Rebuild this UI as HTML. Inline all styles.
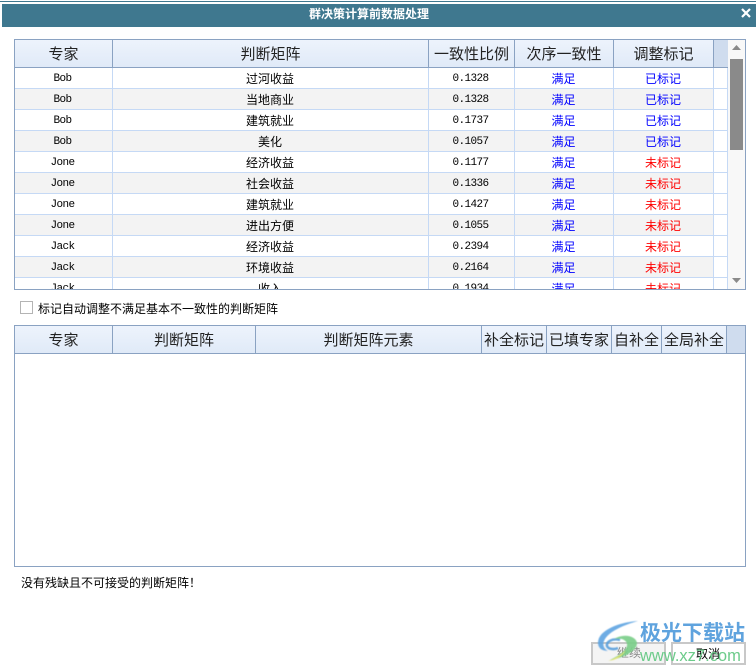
<!DOCTYPE html>
<html><head><meta charset="utf-8">
<style>
html,body{margin:0;padding:0;width:756px;height:672px;overflow:hidden;background:#fff}
body{position:relative;font-family:"Liberation Sans","WenQuanYi Zen Hei","Noto Sans CJK SC",sans-serif;color:#000}
.abs{position:absolute}
.box{position:absolute;left:14px;width:730px;border:1px solid #8aa2c2;overflow:hidden;background:#fff}
table{border-collapse:separate;border-spacing:0;table-layout:fixed;position:absolute;left:0;top:0}
th{padding:0;box-sizing:border-box;height:28px;font-weight:normal;font-size:15px;color:#222;border-right:1px solid #8aa2c2;border-bottom:1px solid #8aa2c2;background:linear-gradient(#edf3fc,#e0eaf8);white-space:nowrap;overflow:hidden}
td{box-sizing:border-box;height:21px;padding:0 1px 0 0;font-size:12px;text-align:center;border-right:1px solid #c5d9f5;border-bottom:1px solid #c5d9f5;white-space:nowrap;overflow:hidden}
tr.e td{background:#f3f3f3}
tr td:last-child{background:#fff}
td.m{font-family:"Liberation Mono",monospace;font-size:11px;letter-spacing:-.6px;padding:2px 2px 0 0}
.b{color:#00f}.r{color:#f00}
th.x{background:#cfdcee;border-right:0}
</style></head><body>
<div class="abs" style="left:0;top:1px;width:756px;height:1px;background:#3f788f"></div>
<div class="abs" style="left:2px;top:4px;width:754px;height:23px;background:#3f788f"></div>
<div class="abs" style="left:2px;top:4px;width:734px;height:21px;line-height:20px;text-align:center;color:#fff;font-size:12px;font-weight:bold">群决策计算前数据处理</div>
<svg class="abs" style="left:740px;top:7px" width="12" height="12"><path d="M2 2L10 10M10 2L2 10" stroke="#fff" stroke-width="2.2"/></svg>

<div class="box" style="top:39px;height:249px">
<table style="width:713px">
<colgroup><col style="width:98px"><col style="width:316px"><col style="width:86px"><col style="width:99px"><col style="width:100px"><col style="width:14px"></colgroup>
<tr><th>专家</th><th>判断矩阵</th><th>一致性比例</th><th>次序一致性</th><th>调整标记</th><th class="x"></th></tr>
<tr><td class="m">Bob</td><td>过河收益</td><td class="m">0.1328</td><td class="b">满足</td><td class="b">已标记</td><td></td></tr>
<tr class="e"><td class="m">Bob</td><td>当地商业</td><td class="m">0.1328</td><td class="b">满足</td><td class="b">已标记</td><td></td></tr>
<tr><td class="m">Bob</td><td>建筑就业</td><td class="m">0.1737</td><td class="b">满足</td><td class="b">已标记</td><td></td></tr>
<tr class="e"><td class="m">Bob</td><td>美化</td><td class="m">0.1057</td><td class="b">满足</td><td class="b">已标记</td><td></td></tr>
<tr><td class="m">Jone</td><td>经济收益</td><td class="m">0.1177</td><td class="b">满足</td><td class="r">未标记</td><td></td></tr>
<tr class="e"><td class="m">Jone</td><td>社会收益</td><td class="m">0.1336</td><td class="b">满足</td><td class="r">未标记</td><td></td></tr>
<tr><td class="m">Jone</td><td>建筑就业</td><td class="m">0.1427</td><td class="b">满足</td><td class="r">未标记</td><td></td></tr>
<tr class="e"><td class="m">Jone</td><td>进出方便</td><td class="m">0.1055</td><td class="b">满足</td><td class="r">未标记</td><td></td></tr>
<tr><td class="m">Jack</td><td>经济收益</td><td class="m">0.2394</td><td class="b">满足</td><td class="r">未标记</td><td></td></tr>
<tr class="e"><td class="m">Jack</td><td>环境收益</td><td class="m">0.2164</td><td class="b">满足</td><td class="r">未标记</td><td></td></tr>
<tr><td class="m">Jack</td><td>收入</td><td class="m">0.1934</td><td class="b">满足</td><td class="r">未标记</td><td></td></tr>
</table>
<div class="abs" style="left:713px;top:0;width:17px;height:249px;background:#f8f8f8"></div>
<svg class="abs" style="left:713px;top:0" width="17" height="249">
<path d="M4 10L8.5 5L13 10Z" fill="#8a8a8a"/>
<rect x="2" y="19" width="13" height="91" fill="#8a8a8a"/>
<path d="M4 238L8.5 243L13 238Z" fill="#8a8a8a"/>
</svg>
</div>

<div class="abs" style="left:20px;top:301px;width:11px;height:11px;border:1px solid #b4b4b4;background:#fff"></div>
<div class="abs" style="left:38px;top:301px;font-size:12px;line-height:16px;white-space:nowrap">标记自动调整不满足基本不一致性的判断矩阵</div>

<div class="box" style="top:325px;height:240px">
<table style="width:730px">
<colgroup><col style="width:98px"><col style="width:143px"><col style="width:226px"><col style="width:65px"><col style="width:65px"><col style="width:50px"><col style="width:65px"><col style="width:18px"></colgroup>
<tr><th>专家</th><th>判断矩阵</th><th>判断矩阵元素</th><th>补全标记</th><th>已填专家</th><th>自补全</th><th>全局补全</th><th class="x"></th></tr>
</table>
</div>

<div class="abs" style="left:21px;top:575px;font-size:12px;line-height:16px;white-space:nowrap">没有残缺且不可接受的判断矩阵！</div>

<div class="abs" style="left:591px;top:642px;width:71px;height:19px;border:2px solid #c8c8c8;background:#f4f4f4"></div>
<div class="abs" style="left:671px;top:642px;width:71px;height:19px;border:2px solid #c8c8c8;background:#fff"></div>
<div class="abs" style="left:617px;top:645px;font-size:12px;line-height:16px;color:#888">继续</div>
<div class="abs" style="left:696px;top:646px;font-size:12px;line-height:16px">取消</div>

<svg class="abs" style="left:590px;top:618px" width="60" height="50" viewBox="0 0 60 50">
<g style="filter:blur(.5px)" opacity=".92">
<path d="M48 3C32 4 14 10 9 20C6 28 10 33 18 33C13 30 12 26 15 21C20 13 34 7 48 3Z" fill="#62a6e2"/>
<path d="M30 22C22 20 16 24 17 28C18 31 24 32 28 30" fill="none" stroke="#5aa0dc" stroke-width="2.5"/>
<path d="M24 21C34 15 46 18 47 25C47 33 34 40 20 42C30 37 38 31 37 26C36 21 30 20 24 21Z" fill="#7ccf8a"/>
<path d="M18 43C26 40 32 36 36 32C32 39 26 42 18 43Z" fill="#e8e468"/>
</g>
</svg>
<div class="abs" style="left:640px;top:622px;font-size:21px;line-height:24px;font-weight:bold;color:#5fa3de;white-space:nowrap">极光下载站</div>
<div class="abs" style="left:640px;top:647px;font-size:16.5px;line-height:18px;color:#6ccb8a;white-space:nowrap">www.xz7.com</div>
</body></html>
